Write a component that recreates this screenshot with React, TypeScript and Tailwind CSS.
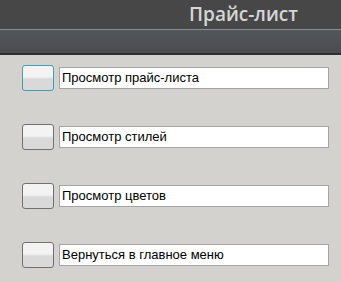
import React from "react";

const ITEMS = [
  "Просмотр прайс-листа",
  "Просмотр стилей",
  "Просмотр цветов",
  "Вернуться в главное меню",
];

export default function App() {
  return (
    <div className="h-[282px] w-[341px] overflow-hidden bg-[#d4d2cf] font-['Liberation_Sans',sans-serif]">
      <header className="flex h-[30px] items-start justify-end border-b border-[#8a8e96] bg-[#474747] pr-[43px]">
        <h1 className="mt-[1px] font-['Open_Sans',sans-serif] text-[19px] font-semibold leading-[26px] text-[#d6d6d6]">
          Прайс-лист
        </h1>
      </header>
      <div className="h-[25px] border-b-2 border-[#2e2f31] bg-gradient-to-b from-[#53565b] to-[#4a4c50]" />

      <div className="flex flex-col gap-[33px] pl-[22px] pt-[10px]">
        {ITEMS.map((label, i) => (
          <div key={label} className="flex items-center gap-[5px]">
            <button
              type="button"
              className={`h-[26px] w-[32px] rounded-[3px] border bg-gradient-to-b from-[#f3f3f3] from-45% to-[#d9d9d9] to-55% ${
                i === 0 ? "border-[#3f9fb3]" : "border-[#707070]"
              }`}
            />
            <div className="flex h-[22px] w-[270px] items-center border border-[#a3a5a8] bg-white pl-[2px] text-[13px] text-black">
              {label}
            </div>
          </div>
        ))}
      </div>
    </div>
  );
}
